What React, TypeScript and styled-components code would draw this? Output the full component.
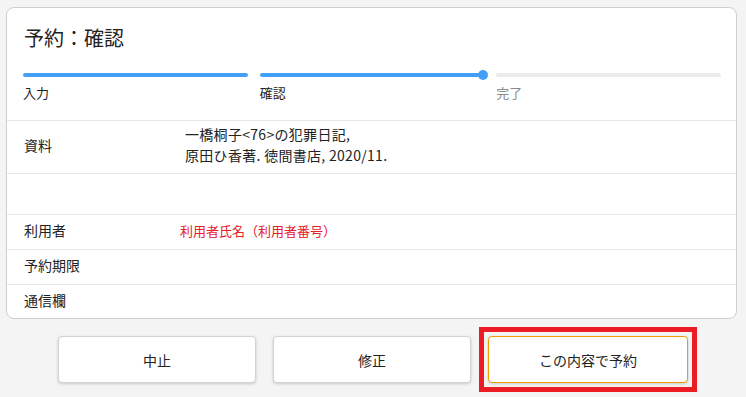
import React, { FC } from 'react';
import styled, { createGlobalStyle } from 'styled-components';

const FONT = '"Noto Sans CJK JP", "Noto Sans", "Liberation Sans", sans-serif';
const BLUE = '#42a0f8';

const GlobalStyle = createGlobalStyle`
  html, body {
    margin: 0;
    background: #f4f4f4;
    font-family: ${FONT};
    color: #222;
  }
`;

const Page = styled.div`
  width: 746px;
  height: 397px;
  box-sizing: border-box;
  padding: 7px 9px 0 6px;
`;

const Card = styled.div`
  background: #fff;
  border: 1px solid #cfcfcf;
  border-radius: 8px;
  overflow: hidden;
`;

const Title = styled.h1`
  margin: 0;
  padding: 19px 0 0 17px;
  font-size: 20px;
  font-weight: 400;
  line-height: 22px;
  box-sizing: border-box;
  height: 44px;
`;

const Steps = styled.div`
  display: grid;
  grid-template-columns: repeat(3, 1fr);
  gap: 12px;
  padding: 21px 15px 0 16px;
  height: 68px;
  box-sizing: border-box;
`;

const Step = styled.div<{ $done: boolean }>`
  display: flex;
  flex-direction: column;
  gap: 7px;
  font-size: 13px;
  line-height: 18px;
  color: ${(p) => (p.$done ? '#222' : '#8c8c8c')};
`;

const Bar = styled.div<{ $done: boolean; $current?: boolean }>`
  position: relative;
  height: 4px;
  border-radius: 2px;
  background: ${(p) => (p.$done ? BLUE : '#ebebeb')};

  &::after {
    content: '';
    display: ${(p) => (p.$current ? 'block' : 'none')};
    position: absolute;
    right: -4px;
    top: -3px;
    width: 10px;
    height: 10px;
    border-radius: 50%;
    background: ${BLUE};
  }
`;

const Row = styled.div<{ $h: number }>`
  display: grid;
  grid-template-columns: 178px 1fr;
  align-items: center;
  height: ${(p) => p.$h}px;
  padding-bottom: 4px;
  border-top: 1px solid #e6e6e6;
  box-sizing: border-box;
  font-size: 14px;
`;

const Label = styled.div`
  padding-left: 17px;
`;

const Value = styled.div<{ $alert?: boolean }>`
  line-height: 21px;
  margin-left: ${(p) => (p.$alert ? '-5px' : '0')};
  color: ${(p) => (p.$alert ? '#e8202a' : '#222')};
  font-size: ${(p) => (p.$alert ? '13px' : '14px')};
  letter-spacing: ${(p) => (p.$alert ? '0' : '0.3px')};
`;

const Actions = styled.div`
  display: flex;
  justify-content: center;
  gap: 17px;
  padding: 17px 0 0 3px;
`;

const Button = styled.button<{ $primary?: boolean }>`
  position: relative;
  width: ${(p) => (p.$primary ? 200 : 198)}px;
  height: 47px;
  background: #fff;
  border: 1px solid ${(p) => (p.$primary ? '#f39800' : '#d2d2d2')};
  border-radius: 4px;
  box-shadow: 0 1px 3px rgba(0, 0, 0, 0.18);
  font-family: ${FONT};
  font-size: 14px;
  color: #222;
  cursor: pointer;

  /* red highlight frame laid over the primary action */
  &::after {
    content: '';
    display: ${(p) => (p.$primary ? 'block' : 'none')};
    position: absolute;
    inset: -10px;
    border: 5px solid #ec1c24;
    pointer-events: none;
  }
`;

const steps = [
  { label: '入力', done: true },
  { label: '確認', done: true, current: true },
  { label: '完了', done: false },
];

const App: FC = () => (
  <Page>
    <GlobalStyle />
    <Card>
      <Title>予約：確認</Title>
      <Steps>
        {steps.map((s) => (
          <Step key={s.label} $done={s.done}>
            <Bar $done={s.done} $current={s.current} />
            {s.label}
          </Step>
        ))}
      </Steps>
      <Row $h={53}>
        <Label>資料</Label>
        <Value>
          一橋桐子&lt;76&gt;の犯罪日記,
          <br />
          原田ひ香著. 徳間書店, 2020/11.
        </Value>
      </Row>
      <Row $h={41} />
      <Row $h={35}>
        <Label>利用者</Label>
        <Value $alert>利用者氏名（利用者番号）</Value>
      </Row>
      <Row $h={35}>
        <Label>予約期限</Label>
        <Value />
      </Row>
      <Row $h={34}>
        <Label>通信欄</Label>
        <Value />
      </Row>
    </Card>
    <Actions>
      <Button>中止</Button>
      <Button>修正</Button>
      <Button $primary>この内容で予約</Button>
    </Actions>
  </Page>
);

export default App;
